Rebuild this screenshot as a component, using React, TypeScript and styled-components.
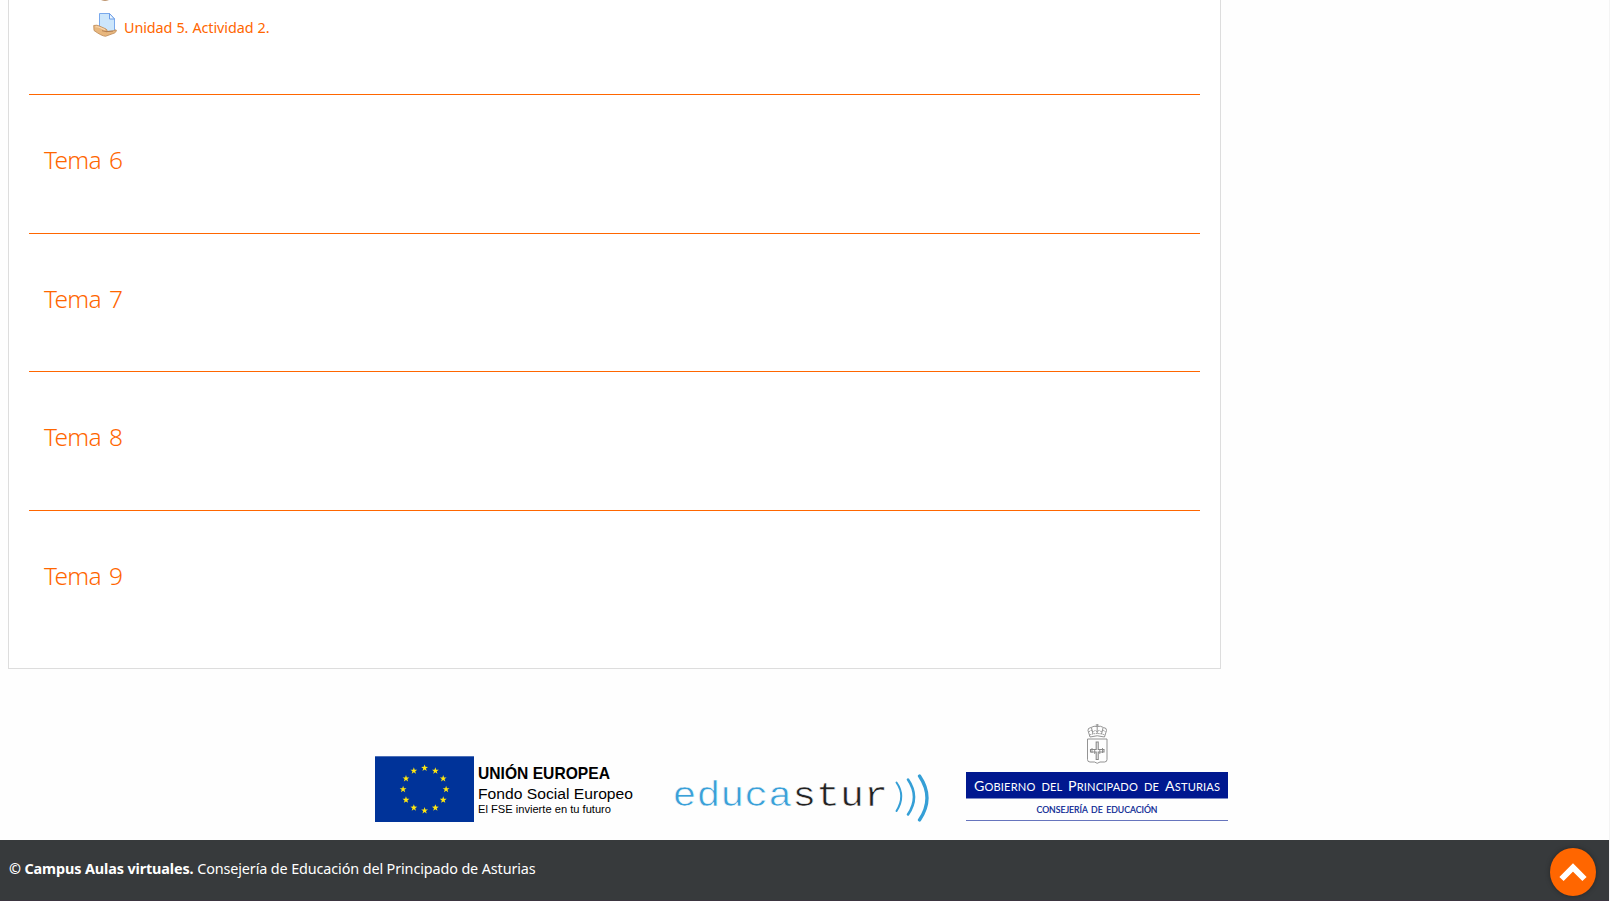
import React from "react";
import styled, { createGlobalStyle } from "styled-components";

const GlobalStyle = createGlobalStyle`
  * { box-sizing: border-box; }
  html, body { margin: 0; padding: 0; background: #fefefe; overflow: hidden; }
  body { font-family: "Noto Sans", sans-serif; color: #ff6600; }
`;

const Page = styled.div`
  height: 901px;
  display: flex;
  flex-direction: column;
  border-right: 1px solid #f4f4f4;
  overflow: hidden;
`;

const CourseBox = styled.main`
  width: 1213px;
  height: 669px;
  margin-left: 8px;
  padding: 0 20px;
  border: 1px solid #dddddd;
  border-top: 0;
  background: #ffffff;
  flex: none;
`;

const ActivitySection = styled.section`
  height: 94px;
  padding-left: 64px;
`;

const PreviousIcon = styled.svg`
  display: block;
  width: 24px;
  height: 2px;
`;

const Activity = styled.a`
  display: flex;
  height: 48px;
  color: #ff6600;
  font-size: 14.4px;
  line-height: 20px;
  text-decoration: none;
`;

const FileIcon = styled.svg`
  width: 24px;
  height: 26px;
  margin-top: 10px;
  flex: none;
`;

const ActivityName = styled.span`
  margin: 16px 0 0 7px;
  letter-spacing: -0.1px;
  word-spacing: 0.5px;
  white-space: nowrap;
`;

const Topic = styled.section<{ $height: number }>`
  height: ${(p) => p.$height}px;
  border-top: 1px solid #ff6600;
  padding: 47px 15px 0;
`;

const TopicTitle = styled.h3`
  margin: 0;
  font-size: 24.5px;
  font-weight: 300;
  line-height: 36px;
  letter-spacing: -0.75px;
  word-spacing: 2.5px;
`;

const Sponsors = styled.div`
  height: 171px;
  padding: 51px 0 0 375px;
  display: flex;
  align-items: flex-start;
  flex: none;
`;

const EuropeLogo = styled.svg`
  width: 270px;
  height: 70px;
  margin-top: 36px;
`;

const EducasturLogo = styled.svg`
  width: 265px;
  height: 60px;
  margin: 53px 0 0 25px;
`;

const AsturiasLogo = styled.svg`
  width: 264px;
  height: 105px;
  margin-left: 31px;
`;

const Footer = styled.footer`
  height: 61px;
  padding: 0 13px 0 9px;
  display: flex;
  align-items: flex-start;
  justify-content: space-between;
  background: #373a3c;
  border-bottom: 1px solid #3b3540;
  color: #ffffff;
  font-size: 14.4px;
  flex: none;
`;

const Copyright = styled.p`
  margin: 19px 0 0;
  line-height: 20px;
  letter-spacing: -0.12px;
  white-space: nowrap;
`;

const TopButton = styled.button`
  width: 46px;
  height: 48px;
  margin-top: 8px;
  padding: 0;
  border: 0;
  border-radius: 50%;
  background: #ff6600;
  box-shadow: 0 0 5px rgba(0, 0, 0, 0.35);
`;

const Chevron = styled.svg`
  display: block;
  width: 46px;
  height: 48px;
`;

const topics = [
  { name: "Tema 6", height: 139 },
  { name: "Tema 7", height: 138 },
  { name: "Tema 8", height: 139 },
  { name: "Tema 9", height: 158 },
];

const starPoints = Array.from({ length: 10 }, (_, i) => {
  const r = i % 2 ? 1.45 : 3.6;
  const a = (-90 + i * 36) * (Math.PI / 180);
  return `${(r * Math.cos(a)).toFixed(2)},${(r * Math.sin(a)).toFixed(2)}`;
}).join(" ");

const EuropeFlag = () => (
  <EuropeLogo viewBox="0 0 270 70" fontFamily="Liberation Sans, sans-serif" fill="#000">
    <rect y="0.3" width="99" height="65.7" fill="#003399" />
    {Array.from({ length: 12 }, (_, i) => {
      const a = (i * Math.PI) / 6;
      return (
        <polygon
          key={i}
          points={starPoints}
          fill="#ffe710"
          transform={`translate(${49.6 + 21.5 * Math.sin(a)} ${33.3 - 21.3 * Math.cos(a)})`}
        />
      );
    })}
    <text x="103" y="23" fontSize="15.7" fontWeight="700" textLength="132" lengthAdjust="spacingAndGlyphs">UNIÓN EUROPEA</text>
    <text x="103" y="42.7" fontSize="15.2" textLength="155" lengthAdjust="spacingAndGlyphs">Fondo Social Europeo</text>
    <text x="103" y="57.2" fontSize="11.4" textLength="133" lengthAdjust="spacingAndGlyphs">El FSE invierte en tu futuro</text>
  </EuropeLogo>
);

const Educastur = () => (
  <EducasturLogo viewBox="0 0 265 60" fontFamily="Liberation Mono, monospace" fontSize="35">
    <text transform="translate(2.5 32.5) scale(1.14 1)" fill="#3aa0d8" stroke="#fefefe" strokeWidth="0.6">
      educa<tspan fill="#222">stur</tspan>
    </text>
    <g fill="none" stroke="#359fd6" strokeLinecap="round">
      <path d="M226.5 9.5Q236 23 226.5 38" strokeWidth="2" />
      <path d="M238 6.5Q250 24 238 41.5" strokeWidth="2.6" />
      <path d="M249.5 3Q264.5 25 249.5 47" strokeWidth="3.3" />
    </g>
  </EducasturLogo>
);

const Asturias = () => (
  <AsturiasLogo viewBox="0 0 264 105" fontFamily="Lato, sans-serif">
    <g fill="none" stroke="#888" strokeWidth="0.9">
      <path d="M124 17L122 10.500Q121.500 8 125 7.500Q128 5.500 131.200 6.500Q134.500 5.500 137.500 7.500Q141 8 140.500 10.500L138.500 17Q131.200 14.500 124 17Z" />
      <path d="M131.200 6.500V4M129.700 5H132.700M125.500 8L127 14M131.200 7V13.500M137 8L135.500 14" />
      <path d="M123 12Q125 9 127.500 12Q129 9 131.200 12Q133.500 9 135 12Q137.500 9 139.500 12M123.500 15Q131.200 12 139 15" strokeDasharray="1.5 0.7" />
      <path d="M121.500 19H141V39.500Q141 42 138.500 42H134L131.200 43.300L128.500 42H124Q121.500 42 121.500 39.500Z" />
      <path d="M130.200 22H132.200V29.500H138V32H132.200V39.500H130.200V32H124.500V29.500H130.200Z" strokeWidth="1.1" />
      <path d="M126 28V33M136.500 28V33M128.700 29V34M133.800 29V34" />
    </g>
    <rect y="52" width="262" height="26.5" fill="#00188f" />
    <text x="8" y="70.8" fill="#fff" fontSize="11.1" wordSpacing="3" textLength="246">
      <tspan fontSize="14.2">G</tspan>OBIERNO DEL <tspan fontSize="14.2">P</tspan>RINCIPADO DE <tspan fontSize="14.2">A</tspan>STURIAS
    </text>
    <text x="70.5" y="93" fill="#00188f" stroke="#00188f" strokeWidth="0.2" fontSize="9.6" wordSpacing="1.5" textLength="121" lengthAdjust="spacingAndGlyphs">CONSEJERÍA DE EDUCACIÓN</text>
    <path d="M0 100.5H262" stroke="#6674bd" />
  </AsturiasLogo>
);

export default function App() {
  return (
    <>
      <GlobalStyle />
      <Page>
        <CourseBox>
          <ActivitySection>
            <PreviousIcon viewBox="0 0 24 2"><path d="M8 0Q12 1.5 16 0Z" fill="#a66e3c" /></PreviousIcon>
            <Activity href="#">
              <FileIcon viewBox="0 0 24 26">
                <path d="M6.500 1.500H16.500L21.500 7V20.500H6.500Z" fill="#cce6fb" stroke="#79a9ec" />
                <path d="M16.500 1.500V7H21.500Z" fill="#eef8ff" stroke="#6b9ce8" />
                <path d="M0.700 13.500Q4 12.500 7 14.300L13 17Q15.500 18.500 13 19.500L19.500 19L23 17.800Q24.500 19 21.500 21L12.500 24.300Q8.500 24 1 18.500Z" fill="#e8b77e" stroke="#bd8955" strokeWidth="0.8" />
                <path d="M2.500 14.800Q5 14.500 7.500 15.800L12 17.800" stroke="#fadbb5" strokeWidth="1.2" fill="none" />
                <path d="M9 18.700L13.500 19.700L20 19" stroke="#a87347" strokeWidth="0.8" fill="none" />
              </FileIcon>
              <ActivityName>Unidad 5. Actividad 2.</ActivityName>
            </Activity>
          </ActivitySection>
          {topics.map((t) => (
            <Topic key={t.name} $height={t.height}>
              <TopicTitle>{t.name}</TopicTitle>
            </Topic>
          ))}
        </CourseBox>
        <Sponsors>
          <EuropeFlag />
          <Educastur />
          <Asturias />
        </Sponsors>
        <Footer>
          <Copyright><b>© Campus Aulas virtuales.</b> Consejería de Educación del Principado de Asturias</Copyright>
          <TopButton aria-label="Subir">
            <Chevron viewBox="0 0 46 48"><path d="M11.5 31L23 19.5L34.5 31" fill="none" stroke="#fff" strokeWidth="6" /></Chevron>
          </TopButton>
        </Footer>
      </Page>
    </>
  );
}
